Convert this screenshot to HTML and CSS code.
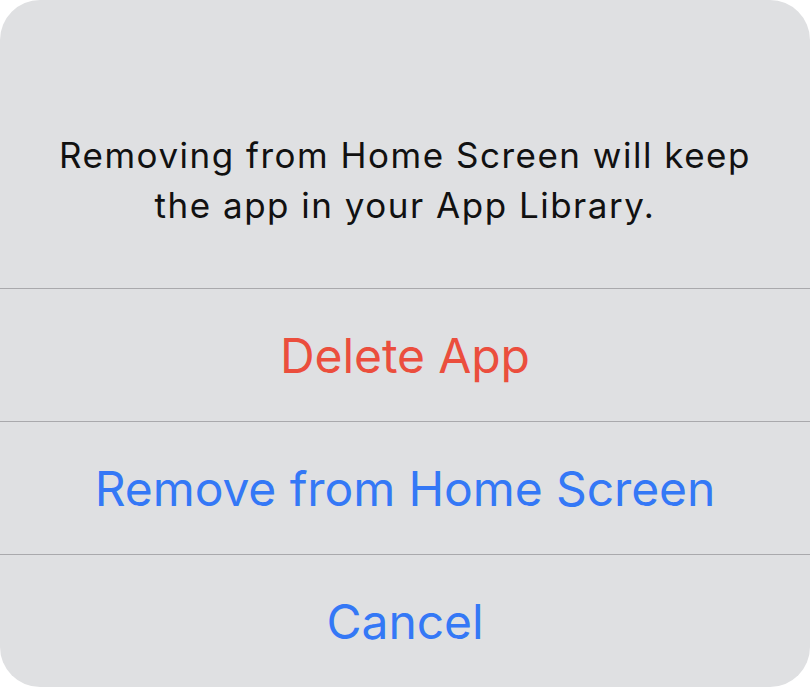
FILE: index.html
```html
<!DOCTYPE html>
<html lang="en">
<head>
<meta charset="utf-8">
<title>Remove App</title>
<link rel="stylesheet" href="styles.css">
</head>
<body>
<div class="sheet">
  <div class="message">
    <p>Removing from Home Screen will keep<br>the app in your App Library.</p>
  </div>
  <button class="action destructive">Delete App</button>
  <button class="action">Remove from Home Screen</button>
  <button class="action">Cancel</button>
</div>
</body>
</html>
```
FILE: styles.css
```css
html, body {
  margin: 0;
  padding: 0;
  background: #ffffff;
}
body {
  width: 810px;
  height: 687px;
  font-family: Inter, "Noto Sans", "Liberation Sans", sans-serif;
}
.sheet {
  box-sizing: border-box;
  width: 810px;
  height: 687px;
  background: #dfe0e2;
  border-radius: 40px;
  overflow: hidden;
  display: grid;
  grid-template-rows: 288px 133px 133px 133px;
}
.message {
  display: flex;
  align-items: flex-start;
  justify-content: center;
  padding-top: 130px;
  box-sizing: border-box;
}
.message p {
  margin: 0;
  text-align: center;
  font-size: 35px;
  line-height: 50px;
  color: #111111;
  letter-spacing: 1.5px;
}
.action {
  border: 0;
  border-top: 1.5px solid #a9a9ac;
  background: transparent;
  margin: 0;
  padding: 0;
  font-family: inherit;
  font-size: 48px;
  letter-spacing: -0.1px;
  color: #3478f6;
  display: flex;
  align-items: center;
  justify-content: center;
}
.destructive {
  color: #eb4e3d;
}
```
